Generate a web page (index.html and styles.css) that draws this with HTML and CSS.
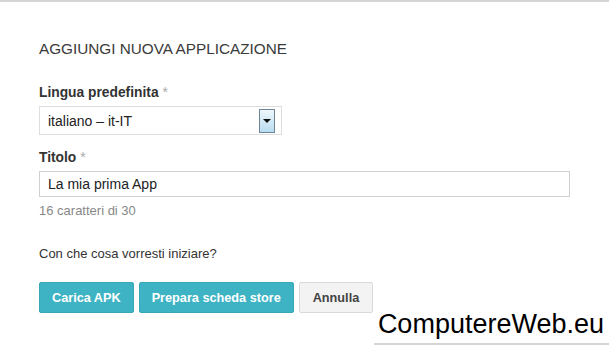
FILE: index.html
```html
<!DOCTYPE html>
<html lang="it">
<head>
<meta charset="utf-8">
<title>Aggiungi nuova applicazione</title>
<link rel="stylesheet" href="styles.css">
</head>
<body>
<div class="page">
  <div class="dialog">
    <h1 class="title">AGGIUNGI NUOVA APPLICAZIONE</h1>
    <div class="field">
      <label class="label">Lingua predefinita <span class="req">*</span></label>
      <div class="select">
        <span class="select-text">italiano – it-IT</span>
        <span class="select-btn"><span class="arrow"></span></span>
      </div>
    </div>
    <div class="field">
      <label class="label">Titolo <span class="req">*</span></label>
      <div class="input">La mia prima App</div>
      <div class="hint">16 caratteri di 30</div>
    </div>
    <p class="question">Con che cosa vorresti iniziare?</p>
    <div class="actions">
      <button class="btn btn-primary">Carica APK</button>
      <button class="btn btn-primary">Prepara scheda store</button>
      <button class="btn btn-default">Annulla</button>
    </div>
  </div>
  <div class="watermark">ComputereWeb.eu</div>
</div>
</body>
</html>
```

FILE: styles.css
```css
html, body {
  margin: 0;
  padding: 0;
  background: #fff;
}
body {
  font-family: "Liberation Sans", Arial, sans-serif;
  color: #333;
}
.page {
  position: relative;
  width: 609px;
  height: 345px;
  overflow: hidden;
  border-top: 2px solid #d4d4d4;
  box-sizing: border-box;
}
.dialog {
  padding: 37px 0 0 39px;
}
.title {
  margin: 0 0 25px;
  font-size: 15.3px;
  font-weight: normal;
  color: #3a3a3a;
  line-height: 20px;
}
.field {
  margin-bottom: 14px;
}
.label {
  display: block;
  font-size: 13.8px;
  font-weight: bold;
  color: #333;
  line-height: 18px;
  margin-bottom: 4px;
}
.req {
  color: #aaa;
  font-weight: normal;
}
.select {
  width: 243px;
  height: 29px;
  box-sizing: border-box;
  border: 1px solid #dedede;
  display: flex;
  align-items: center;
  justify-content: space-between;
  padding: 0 6px 0 8px;
}
.select-text, .input {
  font-size: 14px;
  color: #222;
}
.select-btn {
  width: 16px;
  height: 24px;
  box-sizing: border-box;
  border: 1px solid #6f8596;
  background: linear-gradient(#eef7fc, #b9dcf1);
  display: flex;
  align-items: center;
  justify-content: center;
}
.arrow {
  width: 0;
  height: 0;
  border-left: 4px solid transparent;
  border-right: 4px solid transparent;
  border-top: 4px solid #111;
}
.input {
  width: 531px;
  height: 26px;
  box-sizing: border-box;
  border: 1px solid #d0d0d0;
  padding: 0 8px;
  display: flex;
  align-items: center;
}
.hint {
  font-size: 13px;
  color: #888;
  margin-top: 6px;
  line-height: 16px;
}
.question {
  margin: 27px 0 0;
  font-size: 13px;
  color: #333;
  line-height: 16px;
}
.actions {
  display: flex;
  gap: 5px;
  margin-top: 20px;
}
.btn {
  font-family: inherit;
  font-size: 12.7px;
  font-weight: bold;
  height: 31px;
  padding: 0 12px;
  border-radius: 2px;
  cursor: pointer;
}
.btn-primary {
  background: #3eb3c3;
  border: 1px solid #36a8b8;
  color: #fff;
}
.btn-default {
  background: #f3f3f3;
  border: 1px solid #d9d9d9;
  color: #444;
  padding: 0 13px;
}
.watermark {
  position: absolute;
  right: 0;
  bottom: 0;
  background: #fff;
  font-size: 27px;
  color: #000;
  padding: 0 5px 4px 4px;
  line-height: 29px;
  border-bottom: 2px solid #d4d4d4;
}
```
